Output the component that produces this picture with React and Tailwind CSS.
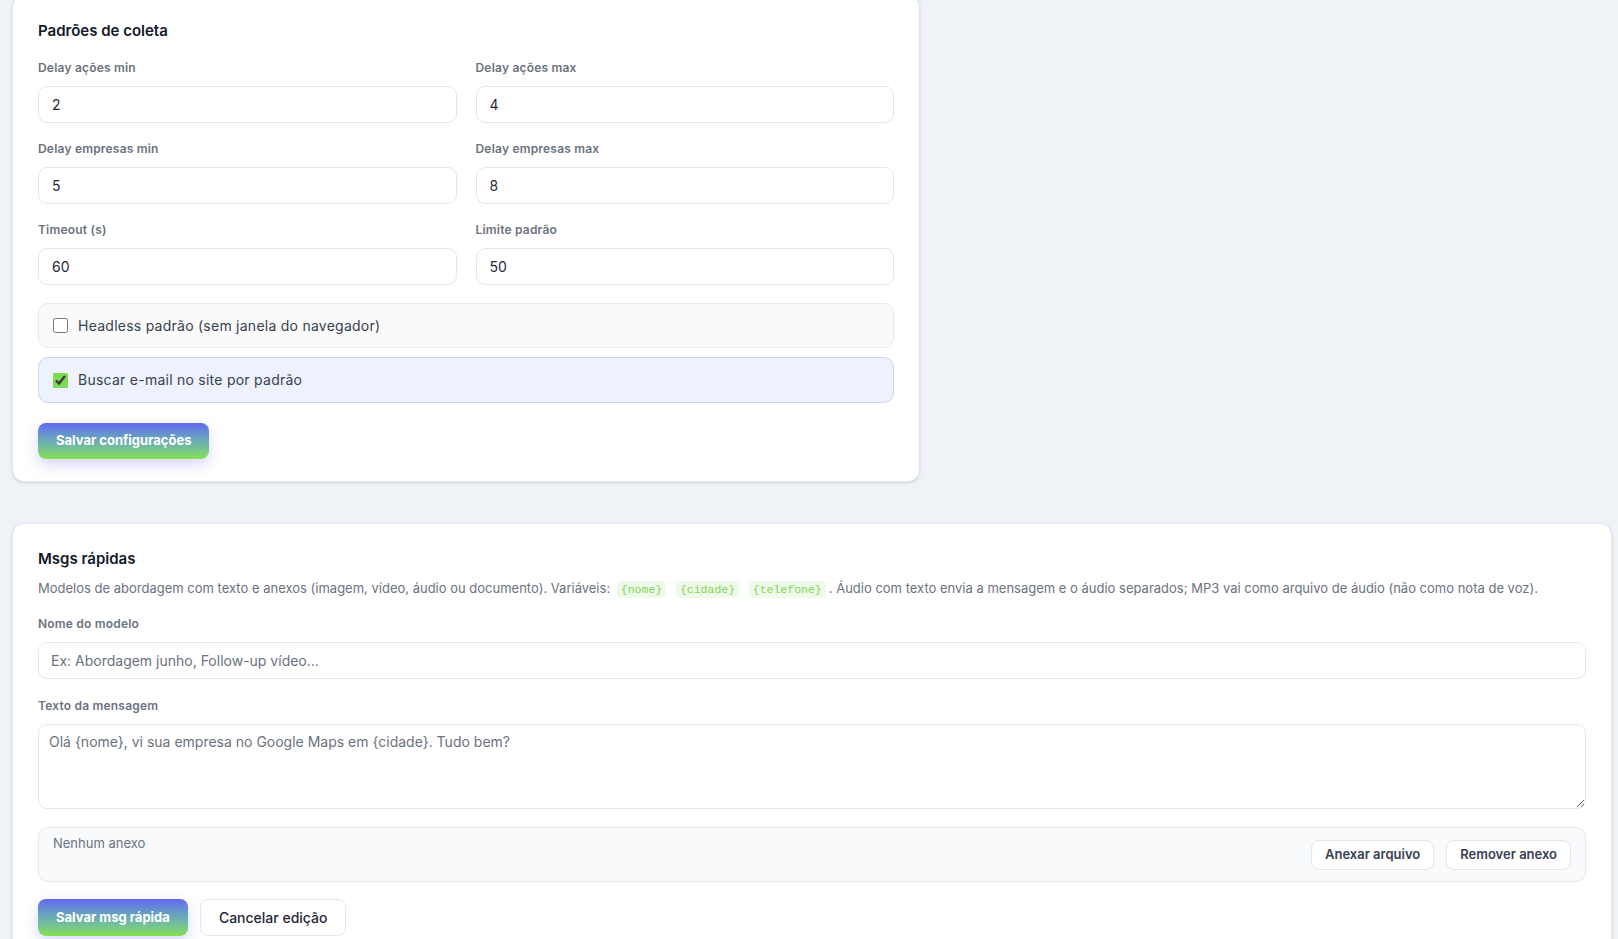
import React from 'react';

const ui = { fontFamily: 'Inter, "Noto Sans", sans-serif' };
const mono = { fontFamily: '"Liberation Mono", "DejaVu Sans Mono", monospace' };

function Field({ label, value }) {
  return (
    <div className="flex flex-col">
      <label className="text-xs font-semibold text-[#6b7280] leading-4 mb-2.5 tracking-[0.2px]">{label}</label>
      <input
        defaultValue={value}
        className="h-[37px] w-full rounded-[9px] border border-[#e2e8f0] bg-white px-[13px] text-sm text-[#1f2937] outline-none"
      />
    </div>
  );
}

function Check({ label, checked, active }) {
  return (
    <label
      className={
        active
          ? 'flex items-center gap-2.5 rounded-[10px] border border-[#cdd6f5] bg-[#eef2fd] px-[14px] h-[46px]'
          : 'flex items-center gap-2.5 rounded-[10px] border border-[#e7e9ee] bg-[#fafafa] px-[14px] h-[45px]'
      }
    >
      <input type="checkbox" defaultChecked={checked} className="h-[15px] w-[15px] accent-[#7ed957]" />
      <span className="text-sm tracking-[0.25px] text-[#374151]">{label}</span>
    </label>
  );
}

function Var({ children }) {
  return (
    <code className="mx-[3px] rounded bg-[#effbea] px-[4px] py-0.5 text-[11.5px] text-[#7fd44f]" style={mono}>
      {children}
    </code>
  );
}

export default function App() {
  return (
    <div className="min-h-screen bg-[#eff3f8] pl-3 pr-[6px] pb-10" style={ui}>
      <section className="-mt-[5px] w-[908px] rounded-xl border border-[#e5e7eb] bg-white px-[25px] pt-[25px] pb-[22px] shadow-sm">
        <h2 className="text-[15px] font-semibold leading-5 text-[#111827]">Padrões de coleta</h2>
        <div className="mt-[19px] grid grid-cols-2 gap-x-[19px] gap-y-[18px]">
          <Field label="Delay ações min" value="2" />
          <Field label="Delay ações max" value="4" />
          <Field label="Delay empresas min" value="5" />
          <Field label="Delay empresas max" value="8" />
          <Field label="Timeout (s)" value="60" />
          <Field label="Limite padrão" value="50" />
        </div>
        <div className="mt-[18px] flex flex-col gap-[9px]">
          <Check label="Headless padrão (sem janela do navegador)" />
          <Check label="Buscar e-mail no site por padrão" checked active />
        </div>
        <button className="mt-[20px] h-[36px] rounded-lg bg-gradient-to-b from-[#6366f1] to-[#86e04a] px-[18px] text-[13px] font-bold text-white shadow-[0_6px_14px_rgba(99,102,241,0.25)]">
          Salvar configurações
        </button>
      </section>

      <section className="mt-[41px] rounded-xl border border-[#e5e7eb] bg-white px-[25px] pt-[25px] pb-[30px] shadow-sm">
        <h2 className="text-[15px] font-semibold leading-5 text-[#111827]">Msgs rápidas</h2>
        <p className="mt-[9px] text-[13px] leading-5 text-[#6b7280] whitespace-nowrap">
          Modelos de abordagem com texto e anexos (imagem, vídeo, áudio ou documento). Variáveis: <Var>{'{nome}'}</Var>{' '}
          <Var>{'{cidade}'}</Var> <Var>{'{telefone}'}</Var>. Áudio com texto envia a mensagem e o áudio separados; MP3 vai como
          arquivo de áudio (não como nota de voz).
        </p>

        <label className="mt-[16px] mb-2.5 block text-xs font-semibold leading-4 text-[#6b7280] tracking-[0.2px]">Nome do modelo</label>
        <input
          placeholder="Ex: Abordagem junho, Follow-up vídeo..."
          className="h-[37px] w-full rounded-[9px] border border-[#e2e8f0] bg-white px-[12px] text-sm text-[#1f2937] outline-none placeholder:text-[#6b7280]"
        />

        <label className="mt-[19px] mb-2.5 block text-xs font-semibold leading-4 text-[#6b7280] tracking-[0.2px]">Texto da mensagem</label>
        <textarea
          placeholder="Olá {nome}, vi sua empresa no Google Maps em {cidade}. Tudo bem?"
          className="block h-[85px] w-full rounded-[9px] border border-[#e2e8f0] bg-white px-[10px] py-[7px] text-sm text-[#1f2937] outline-none placeholder:text-[#6b7280]"
        />

        <div className="mt-[18px] flex h-[55px] items-center justify-between rounded-[10px] border border-[#e5e9f0] bg-[#f8fafc] pl-[14px] pr-[14px]">
          <span className="self-start pt-[6px] text-[13px] text-[#6b7280]">Nenhum anexo</span>
          <div className="flex gap-3">
            <button className="h-[30px] rounded-lg border border-[#e2e8f0] bg-white px-[13px] text-[13px] font-semibold text-[#374151]">
              Anexar arquivo
            </button>
            <button className="h-[30px] rounded-lg border border-[#e2e8f0] bg-white px-[13px] text-[13px] font-semibold text-[#374151]">
              Remover anexo
            </button>
          </div>
        </div>

        <div className="mt-[17px] flex gap-3">
          <button className="h-[37px] rounded-lg bg-gradient-to-b from-[#6366f1] to-[#86e04a] px-[18px] text-[13px] font-bold text-white shadow-[0_6px_14px_rgba(99,102,241,0.25)]">
            Salvar msg rápida
          </button>
          <button className="h-[37px] rounded-lg border border-[#e2e8f0] bg-white px-[18px] text-sm font-medium text-[#1f2937]">
            Cancelar edição
          </button>
        </div>
      </section>
    </div>
  );
}
